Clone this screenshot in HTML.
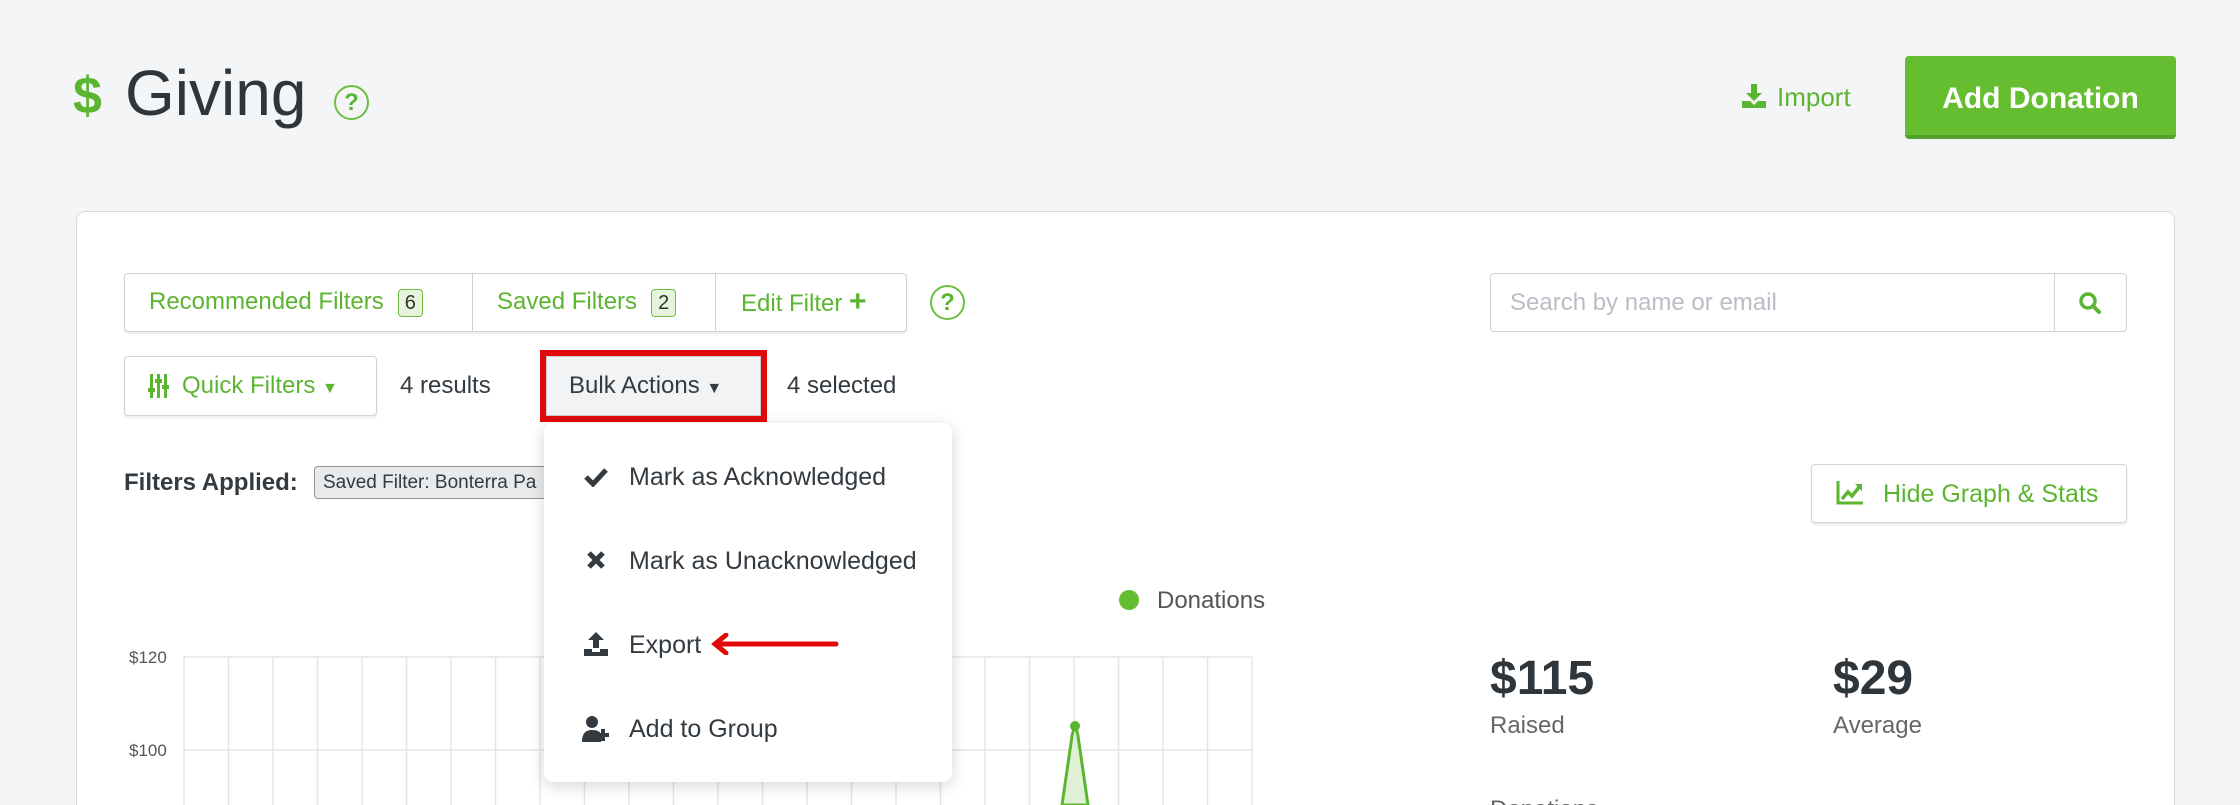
<!DOCTYPE html>
<html><head><meta charset="utf-8"><style>
*{box-sizing:border-box;margin:0;padding:0}
html,body{width:2240px;height:805px;overflow:hidden}
body{background:#f4f5f7;font-family:"Liberation Sans",sans-serif;color:#333a40;position:relative}
.a{position:absolute;white-space:nowrap}
.g{color:#5cb531}
.btn{position:absolute;background:#fff;border:1px solid #cfd3d8;border-radius:4px;box-shadow:0 2px 2px rgba(0,0,0,.08)}
.badge{display:inline-block;border:1px solid #6cbf3f;background:#e6f4dc;color:#333;border-radius:4px;font-size:20px;padding:1px 6px;line-height:24px;vertical-align:middle;margin-left:14px}
.help{position:absolute;border:2px solid #6cbf3f;border-radius:50%;color:#5cb531;font-weight:bold;text-align:center}
.item{position:absolute;left:629px;font-size:25px;color:#333a40}
</style></head><body>
<!-- header -->
<div class="a g" style="left:73px;top:66px;font-size:52px;font-weight:bold;line-height:60px">$</div>
<div class="a" style="left:125px;top:55px;font-size:64px;line-height:76px;color:#2f363b">Giving</div>
<div class="help" style="left:334px;top:85px;width:35px;height:35px;font-size:24px;line-height:31px">?</div>
<svg class="a" style="left:1742px;top:84px" width="24" height="24" viewBox="0 0 24 24"><path d="M9 0h6v9h5l-8 8-8-8h5z M0 17h8l4 4 4-4h8v7H0z" fill="#5cb531"/></svg>
<div class="a g" style="left:1777px;top:82px;font-size:26px;line-height:30px">Import</div>
<div class="a" style="left:1905px;top:56px;width:271px;height:83px;background:#65bd30;border-bottom:4px solid #54a22a;border-radius:4px;color:#fff;font-size:30px;font-weight:bold;text-align:center;line-height:86px">Add Donation</div>
<!-- card -->
<div class="a" style="left:76px;top:211px;width:2099px;height:610px;background:#fff;border:1px solid #d5d9de;border-radius:9px"></div>
<!-- filter group -->
<div class="btn" style="left:124px;top:273px;width:783px;height:59px"></div>
<div class="a" style="left:472px;top:273px;width:1px;height:59px;background:#cfd3d8"></div>
<div class="a" style="left:715px;top:273px;width:1px;height:59px;background:#cfd3d8"></div>
<div class="a g" style="left:149px;top:286px;font-size:24px;line-height:32px">Recommended Filters<span class="badge">6</span></div>
<div class="a g" style="left:497px;top:286px;font-size:24px;line-height:32px">Saved Filters<span class="badge">2</span></div>
<div class="a g" style="left:741px;top:286px;font-size:24px;line-height:32px">Edit Filter <b style="font-size:30px">+</b></div>
<div class="help" style="left:930px;top:285px;width:35px;height:35px;font-size:24px;line-height:31px">?</div>
<!-- search -->
<div class="btn" style="left:1490px;top:273px;width:637px;height:59px;box-shadow:none"></div>
<div class="a" style="left:2054px;top:273px;width:1px;height:59px;background:#cfd3d8"></div>
<div class="a" style="left:1510px;top:288px;font-size:24px;color:#b9bec4;line-height:30px">Search by name or email</div>
<svg class="a" style="left:2078px;top:291px" width="24" height="24" viewBox="0 0 24 24"><circle cx="10" cy="10" r="7" fill="none" stroke="#5cb531" stroke-width="3.5"/><path d="M15 15l6 6" stroke="#5cb531" stroke-width="4" stroke-linecap="round"/></svg>
<!-- row 2 -->
<div class="btn" style="left:124px;top:356px;width:253px;height:60px"></div>
<svg class="a" style="left:148px;top:374px" width="22" height="24" viewBox="0 0 22 24"><g fill="#5cb531"><rect x="2" y="0" width="3" height="24"/><rect x="9" y="0" width="3" height="24"/><rect x="16" y="0" width="3" height="24"/><rect x="0" y="14" width="7" height="4"/><rect x="7" y="5" width="7" height="4"/><rect x="14" y="11" width="7" height="4"/></g></svg>
<div class="a g" style="left:182px;top:370px;font-size:24px;line-height:32px">Quick Filters <span style="font-size:16px">▼</span></div>
<div class="a" style="left:400px;top:370px;font-size:24px;line-height:32px">4 results</div>
<div class="a" style="left:540px;top:350px;width:227px;height:72px;border:6px solid #e10a0a"></div>
<div class="a" style="left:546px;top:356px;width:215px;height:60px;background:#f2f3f5;border:1px solid #c8ccd1"></div>
<div class="a" style="left:569px;top:370px;font-size:24px;line-height:32px">Bulk Actions <span style="font-size:16px">▼</span></div>
<div class="a" style="left:787px;top:370px;font-size:24px;line-height:32px">4 selected</div>
<!-- filters applied -->
<div class="a" style="left:124px;top:467px;font-size:24px;line-height:32px;font-weight:bold;color:#333a40">Filters Applied:</div>
<div class="a" style="left:314px;top:466px;width:240px;height:33px;background:#e8eaec;border:1px solid #8d949a;border-radius:4px;font-size:19px;line-height:31px;padding-left:8px;overflow:hidden">Saved Filter: Bonterra Pa</div>
<!-- hide graph -->
<div class="btn" style="left:1811px;top:464px;width:316px;height:59px"></div>
<svg class="a" style="left:1836px;top:481px" width="28" height="24" viewBox="0 0 28 24"><path d="M2 0v22h25" fill="none" stroke="#5cb531" stroke-width="3"/><path d="M6 18l6-7 4 4 8-10" fill="none" stroke="#5cb531" stroke-width="3.5"/><path d="M19 3h7v7z" fill="#5cb531"/></svg>
<div class="a g" style="left:1883px;top:478px;font-size:25px;line-height:32px">Hide Graph &amp; Stats</div>
<!-- chart -->
<svg class="a" style="left:0;top:580px" width="1300" height="225">
<g stroke="#e3e5e8" stroke-width="1.5">
<line x1="184" y1="77" x2="1252" y2="77"/><line x1="184" y1="170" x2="1252" y2="170"/>
<line x1="184" y1="77" x2="184" y2="225"/><line x1="228.5" y1="77" x2="228.5" y2="225"/><line x1="273" y1="77" x2="273" y2="225"/><line x1="317.5" y1="77" x2="317.5" y2="225"/><line x1="362" y1="77" x2="362" y2="225"/><line x1="406.5" y1="77" x2="406.5" y2="225"/><line x1="451" y1="77" x2="451" y2="225"/><line x1="495.5" y1="77" x2="495.5" y2="225"/><line x1="540" y1="77" x2="540" y2="225"/><line x1="584.5" y1="77" x2="584.5" y2="225"/><line x1="629" y1="77" x2="629" y2="225"/><line x1="673.5" y1="77" x2="673.5" y2="225"/><line x1="718" y1="77" x2="718" y2="225"/><line x1="762.5" y1="77" x2="762.5" y2="225"/><line x1="807" y1="77" x2="807" y2="225"/><line x1="851.5" y1="77" x2="851.5" y2="225"/><line x1="896" y1="77" x2="896" y2="225"/><line x1="940.5" y1="77" x2="940.5" y2="225"/><line x1="985" y1="77" x2="985" y2="225"/><line x1="1029.5" y1="77" x2="1029.5" y2="225"/><line x1="1074" y1="77" x2="1074" y2="225"/><line x1="1118.5" y1="77" x2="1118.5" y2="225"/><line x1="1163" y1="77" x2="1163" y2="225"/><line x1="1207.5" y1="77" x2="1207.5" y2="225"/><line x1="1252" y1="77" x2="1252" y2="225"/>
</g>
<text x="129" y="83" font-size="17" fill="#555" font-family="Liberation Sans">$120</text>
<text x="129" y="176" font-size="17" fill="#555" font-family="Liberation Sans">$100</text>
<path d="M1062 225 L1072 156 Q1075 140 1078 156 L1088 225z" fill="#dff0d4" stroke="#5cb531" stroke-width="3"/>
<circle cx="1075" cy="146" r="5" fill="#5cb531"/>
<circle cx="1129" cy="20" r="10" fill="#65bd30"/>
</svg>
<div class="a" style="left:1157px;top:586px;font-size:24px;line-height:30px;color:#555">Donations</div>
<!-- stats -->
<div class="a" style="left:1490px;top:653px;font-size:48px;line-height:52px;font-weight:bold;color:#2f363b">$115</div>
<div class="a" style="left:1490px;top:711px;font-size:24px;line-height:30px;color:#666">Raised</div>
<div class="a" style="left:1833px;top:653px;font-size:48px;line-height:52px;font-weight:bold;color:#2f363b">$29</div>
<div class="a" style="left:1833px;top:711px;font-size:24px;line-height:30px;color:#666">Average</div>
<div class="a" style="left:1490px;top:795px;font-size:24px;line-height:30px;color:#666">Donations</div>
<!-- dropdown -->
<div class="a" style="left:544px;top:423px;width:408px;height:359px;background:#fff;border-radius:9px;box-shadow:0 4px 16px rgba(0,0,0,.16)"></div>
<svg class="a" style="left:584px;top:467px" width="24" height="20" viewBox="0 0 24 20"><path d="M2 10l7 7L22 3" fill="none" stroke="#333a40" stroke-width="5"/></svg>
<div class="item" style="top:461px;line-height:32px">Mark as Acknowledged</div>
<svg class="a" style="left:587px;top:551px" width="18" height="18" viewBox="0 0 18 18"><path d="M2 2l14 14M16 2L2 16" stroke="#333a40" stroke-width="5"/></svg>
<div class="item" style="top:545px;line-height:32px">Mark as Unacknowledged</div>
<svg class="a" style="left:584px;top:632px" width="24" height="24" viewBox="0 0 24 24"><path d="M12 0l-8 8h5v8h6V8h5z M0 17h8v3h8v-3h8v7H0z" fill="#333a40"/></svg>
<div class="item" style="top:629px;line-height:32px">Export</div>
<svg class="a" style="left:710px;top:633px" width="130" height="22" viewBox="0 0 130 22"><path d="M6 11H126" stroke="#e10a0a" stroke-width="5" stroke-linecap="round"/><path d="M16 2L5 11l11 9" fill="none" stroke="#e10a0a" stroke-width="5" stroke-linecap="round"/></svg>
<svg class="a" style="left:582px;top:716px" width="28" height="26" viewBox="0 0 28 26"><circle cx="10" cy="6" r="6" fill="#333a40"/><path d="M0 26c0-9 4-12 10-12s8 2 9 4v8z" fill="#333a40"/><path d="M21 13v12M15 19h12" stroke="#333a40" stroke-width="4"/></svg>
<div class="item" style="top:713px;line-height:32px">Add to Group</div>
</body></html>
